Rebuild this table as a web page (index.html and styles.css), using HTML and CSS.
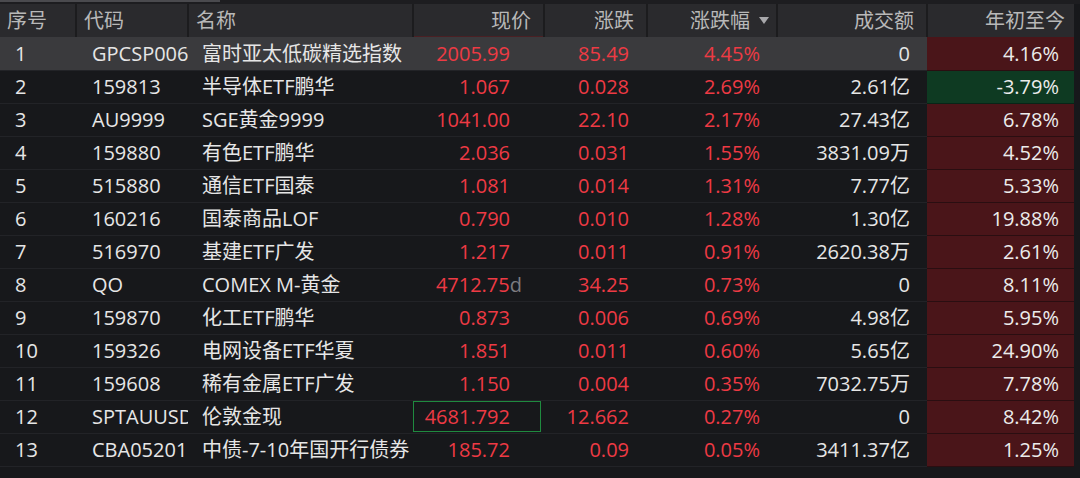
FILE: index.html
```html
<!DOCTYPE html>
<html lang="zh-CN">
<head>
<meta charset="utf-8">
<link rel="stylesheet" href="styles.css">
</head>
<body>
<div class="topbar"><span class="thumb"></span></div>
<table class="quotes">
  <colgroup>
    <col class="c-idx"><col class="c-code"><col class="c-name"><col class="c-price"><col class="c-chg"><col class="c-pct"><col class="c-vol"><col class="c-ytd">
  </colgroup>
  <thead>
    <tr>
      <th class="l">序号</th>
      <th class="l">代码</th>
      <th class="l">名称</th>
      <th class="r price-h">现价</th>
      <th class="r">涨跌</th>
      <th class="r sort">涨跌幅<span class="tri"></span></th>
      <th class="r">成交额</th>
      <th class="r ytd-h">年初至今</th>
    </tr>
  </thead>
  <tbody>
    <tr class="sel"><td class="idx">1</td><td class="code">GPCSP006</td><td class="name">富时亚太低碳精选指数</td><td class="price">2005.99</td><td class="chg">85.49</td><td class="pct">4.45%</td><td class="vol">0</td><td class="ytd up">4.16%</td></tr>
    <tr><td class="idx">2</td><td class="code">159813</td><td class="name">半导体ETF鹏华</td><td class="price">1.067</td><td class="chg">0.028</td><td class="pct">2.69%</td><td class="vol">2.61亿</td><td class="ytd down">-3.79%</td></tr>
    <tr><td class="idx">3</td><td class="code">AU9999</td><td class="name">SGE黄金9999</td><td class="price">1041.00</td><td class="chg">22.10</td><td class="pct">2.17%</td><td class="vol">27.43亿</td><td class="ytd up">6.78%</td></tr>
    <tr><td class="idx">4</td><td class="code">159880</td><td class="name">有色ETF鹏华</td><td class="price">2.036</td><td class="chg">0.031</td><td class="pct">1.55%</td><td class="vol">3831.09万</td><td class="ytd up">4.52%</td></tr>
    <tr><td class="idx">5</td><td class="code">515880</td><td class="name">通信ETF国泰</td><td class="price">1.081</td><td class="chg">0.014</td><td class="pct">1.31%</td><td class="vol">7.77亿</td><td class="ytd up">5.33%</td></tr>
    <tr><td class="idx">6</td><td class="code">160216</td><td class="name">国泰商品LOF</td><td class="price">0.790</td><td class="chg">0.010</td><td class="pct">1.28%</td><td class="vol">1.30亿</td><td class="ytd up">19.88%</td></tr>
    <tr><td class="idx">7</td><td class="code">516970</td><td class="name">基建ETF广发</td><td class="price">1.217</td><td class="chg">0.011</td><td class="pct">0.91%</td><td class="vol">2620.38万</td><td class="ytd up">2.61%</td></tr>
    <tr><td class="idx">8</td><td class="code">QO</td><td class="name">COMEX M-黄金</td><td class="price d">4712.75<span class="dflag">d</span></td><td class="chg">34.25</td><td class="pct">0.73%</td><td class="vol">0</td><td class="ytd up">8.11%</td></tr>
    <tr><td class="idx">9</td><td class="code">159870</td><td class="name">化工ETF鹏华</td><td class="price">0.873</td><td class="chg">0.006</td><td class="pct">0.69%</td><td class="vol">4.98亿</td><td class="ytd up">5.95%</td></tr>
    <tr><td class="idx">10</td><td class="code">159326</td><td class="name">电网设备ETF华夏</td><td class="price">1.851</td><td class="chg">0.011</td><td class="pct">0.60%</td><td class="vol">5.65亿</td><td class="ytd up">24.90%</td></tr>
    <tr><td class="idx">11</td><td class="code">159608</td><td class="name">稀有金属ETF广发</td><td class="price">1.150</td><td class="chg">0.004</td><td class="pct">0.35%</td><td class="vol">7032.75万</td><td class="ytd up">7.78%</td></tr>
    <tr><td class="idx">12</td><td class="code">SPTAUUSD</td><td class="name">伦敦金现</td><td class="price boxed"><span class="box">4681.792</span></td><td class="chg">12.662</td><td class="pct">0.27%</td><td class="vol">0</td><td class="ytd up">8.42%</td></tr>
    <tr><td class="idx">13</td><td class="code">CBA05201</td><td class="name">中债-7-10年国开行债券</td><td class="price">185.72</td><td class="chg">0.09</td><td class="pct">0.05%</td><td class="vol">3411.37亿</td><td class="ytd up">1.25%</td></tr>
  </tbody>
</table>
</body>
</html>
```
FILE: styles.css
```css
html, body {
  margin: 0;
  padding: 0;
  background: #17181b;
  width: 1080px;
  height: 478px;
  overflow: hidden;
  font-family: "Open Sans", "Noto Sans CJK SC", sans-serif;
}

.topbar {
  height: 4px;
  background: #1d1d20;
  display: flex;
}
.topbar .thumb {
  width: 220px;
  height: 2px;
  background: #4a4a4e;
}

.quotes {
  width: 1074px;
  table-layout: fixed;
  border-collapse: collapse;
  border-spacing: 0;
}

.c-idx { width: 76px; }
.c-code { width: 112px; }
.c-name { width: 225px; }
.c-price { width: 131px; }
.c-chg { width: 103px; }
.c-pct { width: 130px; }
.c-vol { width: 150px; }
.c-ytd { width: 147px; }

th {
  height: 33px;
  padding: 0;
  background: #2a2a2d;
  color: #b8b8b8;
  font-size: 20px;
  font-weight: normal;
  border-left: 2px solid #1c1c1e;
  white-space: nowrap;
  line-height: 32px;
  box-sizing: border-box;
}
th:first-child { border-left: none; }
th.l { text-align: left; padding-left: 7px; }
th.r { text-align: right; padding-right: 12px; }
th.sort { padding-right: 7px; }
th.ytd-h { padding-right: 9px; }
th.price-h { box-shadow: inset 0 -1px 0 #4a2024; }

.tri {
  display: inline-block;
  width: 0;
  height: 0;
  margin-left: 9px;
  border-left: 5px solid transparent;
  border-right: 5px solid transparent;
  border-top: 7px solid #a8a8ab;
  vertical-align: 4px;
}

td {
  height: 33px;
  padding: 0;
  font-size: 20px;
  line-height: 31px;
  white-space: nowrap;
  overflow: hidden;
  color: #e6e6e6;
  border-bottom: 1px solid #222327;
  box-sizing: border-box;
}

tbody tr.sel td { background: #3a3a3d; }
tbody tr.sel td.ytd { background: #4a1519; }

td.idx { padding-left: 15px; }
td.code { padding-left: 16px; text-overflow: clip; }
td.name { padding-left: 14px; }
td.price { text-align: right; padding-right: 34px; color: #ee3a44; }
td.price.d { padding-right: 22px; }
td.chg { text-align: right; padding-right: 18px; color: #ee3a44; }
td.pct { text-align: right; padding-right: 17px; color: #ee3a44; }
td.vol { text-align: right; padding-right: 17px; }
td.ytd { text-align: right; padding-right: 15px; color: #ececec; border-bottom: 1px solid #2a0e11; }
td.ytd.up { background: #4a1519; }
td.ytd.down { background: #0e3a22; border-bottom-color: #082517; }

.dflag { color: #7c7c80; }

td.boxed { padding: 0 3px 0 0; }
.box {
  display: block;
  height: 31px;
  line-height: 29px;
  border: 1px solid #1f8a3f;
  box-sizing: border-box;
  padding-right: 30px;
  text-align: right;
}
```
